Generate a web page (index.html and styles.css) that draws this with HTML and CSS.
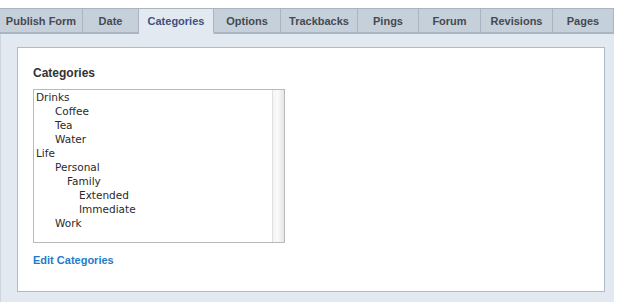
FILE: index.html
```html
<!DOCTYPE html>
<html lang="en">
  <head>
    <meta charset="utf-8" />
    <title>Categories</title>
    <link rel="stylesheet" href="styles.css">
  </head>
  <body>
    <nav class="tabs">
      <div class="tab">Publish Form</div>
      <div class="tab">Date</div>
      <div class="tab active">Categories</div>
      <div class="tab">Options</div>
      <div class="tab">Trackbacks</div>
      <div class="tab">Pings</div>
      <div class="tab">Forum</div>
      <div class="tab">Revisions</div>
      <div class="tab">Pages</div>
    </nav>
    <section class="panel">
      <div class="box">
        <h3 class="title">Categories</h3>
        <div class="listbox">
          <ul class="list">
            <li>Drinks</li>
            <li class="l1">Coffee</li>
            <li class="l1">Tea</li>
            <li class="l1">Water</li>
            <li>Life</li>
            <li class="l1">Personal</li>
            <li class="l2">Family</li>
            <li class="l3">Extended</li>
            <li class="l3">Immediate</li>
            <li class="l1">Work</li>
          </ul>
          <div class="scrollbar"></div>
        </div>
        <a class="edit" href="#">Edit Categories</a>
      </div>
    </section>
  </body>
</html>
```

FILE: styles.css
```css
html,
body {
  margin: 0;
  height: 100%;
  background: #fff;
  font-family: "Liberation Sans", Arial, sans-serif;
  overflow: hidden;
}

.tabs {
  display: flex;
  width: 614px;
  margin-top: 8px;
}

.tab {
  box-sizing: border-box;
  height: 26px;
  line-height: 24px;
  text-align: center;
  font-size: 11px;
  font-weight: bold;
  color: #444a52;
  background: #c6d0da;
  border-top: 1px solid #a9b5c3;
  border-right: 1px solid #a9b5c3;
  border-bottom: 2px solid #a9b5c3;
}

.tab:nth-child(1) { width: 83px; }
.tab:nth-child(2) { width: 56px; }
.tab:nth-child(3) { width: 75px; }
.tab:nth-child(4) { width: 67px; }
.tab:nth-child(5) { width: 77px; }
.tab:nth-child(6) { width: 61px; }
.tab:nth-child(7) { width: 62px; }
.tab:nth-child(8) { width: 72px; }
.tab:nth-child(9) { width: 61px; }

.tab.active {
  background: #e3e9f1;
  color: #3d5280;
  border-bottom-color: #e3e9f1;
}

.panel {
  box-sizing: border-box;
  width: 614px;
  height: 268px;
  background: #e3e9f1;
  border-left: 1px solid #cdd6e0;
  padding: 13px 9px 10px 16px;
}

.box {
  box-sizing: border-box;
  width: 588px;
  height: 245px;
  background: #fff;
  border: 1px solid #aebacb;
  padding: 18px 15px 0;
}

.title {
  margin: 0 0 9px;
  font-size: 12px;
  font-weight: bold;
  color: #333;
  line-height: 14px;
}

.listbox {
  display: flex;
  box-sizing: border-box;
  width: 252px;
  height: 154px;
  border: 1px solid #b9b9b9;
}

.list {
  flex-grow: 1;
  list-style: none;
  margin: 0;
  padding: 0 0 0 2px;
  font-family: "DejaVu Sans", sans-serif;
  font-size: 10.5px;
  line-height: 14px;
  color: #2a2a2a;
}

.list .l1 { padding-left: 19px; }
.list .l2 { padding-left: 31px; }
.list .l3 { padding-left: 43px; }

.scrollbar {
  width: 11px;
  border-left: 1px solid #e0e0e0;
  background: linear-gradient(to right, #f4f4f4, #fafafa 40%, #e6e6e6);
}

.edit {
  display: inline-block;
  margin-top: 11px;
  font-size: 11px;
  font-weight: bold;
  color: #1f7bc8;
  text-decoration: none;
}
```
